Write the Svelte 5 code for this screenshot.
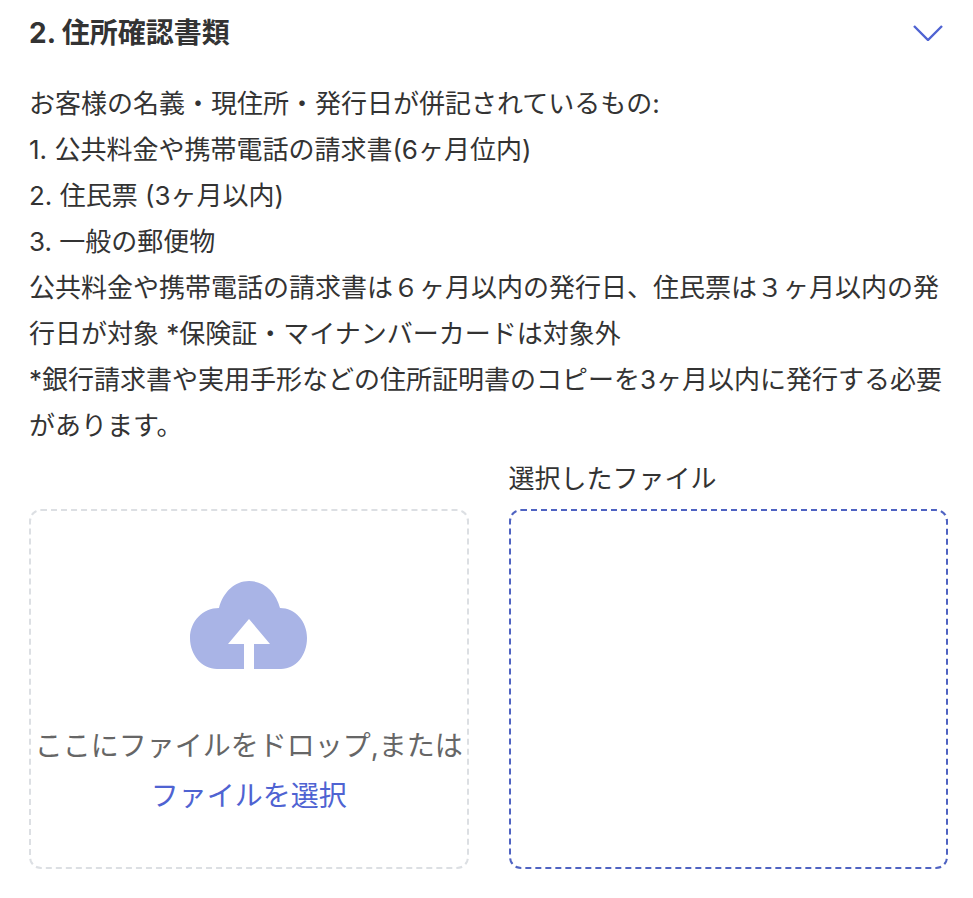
<script>
  const lines = [
    'お客様の名義・現住所・発行日が併記されているもの:',
    '1. 公共料金や携帯電話の請求書(6ヶ月位内)',
    '2. 住民票 (3ヶ月以内)',
    '3. 一般の郵便物',
    '公共料金や携帯電話の請求書は６ヶ月以内の発行日、住民票は３ヶ月以内の発行日が対象 *保険証・マイナンバーカードは対象外',
    '*銀行請求書や実用手形などの住所証明書のコピーを3ヶ月以内に発行する必要があります。'
  ];
</script>

<div class="page">
  <div class="head">
    <h2>2. 住所確認書類</h2>
    <svg class="chev" width="30" height="16" viewBox="0 0 30 16" fill="none"><path d="M1 1 L15 15 L29 1" stroke="#4f63d2" stroke-width="2.4"/></svg>
  </div>
  <div class="desc">
    {#each lines as l}<div>{l}</div>{/each}
  </div>
  <div class="cols">
    <div class="col">
      <div class="label">&nbsp;</div>
      <div class="drop">
        <svg width="118" height="88" viewBox="0 0 118 88"><path fill="#a9b4e6" d="M27 88 C12 88 0 74 0 57 C0 40 13 27 29 27 C33 11 45 0 59 0 C74 0 86 11 90 27 C105 27 117 40 117 57 C117 74 106 88 91 88 L64 88 L64 63 L80 63 L59 38 L38 63 L54 63 L54 88 Z"/></svg>
        <div class="t1">ここにファイルをドロップ,または</div>
        <div class="t2">ファイルを選択</div>
      </div>
    </div>
    <div class="col">
      <div class="label">選択したファイル</div>
      <div class="selected"></div>
    </div>
  </div>
</div>

<style>
  :global(body) { margin: 0; background: #fff; }
  .page { padding: 0 25px 0 29px; font-family: Inter, "Noto Sans CJK JP", sans-serif; color: #333; }
  .head { display: flex; justify-content: space-between; align-items: center; height: 62px; }
  h2 { margin: 0; font-size: 28px; font-weight: 700; color: #333; }
  .chev { margin: 4px 5px 0 0; }
  .desc { font-size: 26px; line-height: 46px; margin-top: 19px; }
  .cols { display: grid; grid-template-columns: 1fr 1fr; gap: 40px; margin-top: 5px; }
  .label { font-size: 26px; line-height: 50px; height: 55px; }
  .drop { height: 360px; box-sizing: border-box; border: 2px dashed #dcdfe3; border-radius: 12px; display: flex; flex-direction: column; align-items: center; padding-top: 70px; }
  .t1 { font-size: 28px; color: #666; margin-top: 55px; white-space: nowrap; }
  .t2 { font-size: 28px; color: #4f63d2; margin-top: 10px; }
  .selected { height: 360px; box-sizing: border-box; border: 2px dashed #4f63c2; border-radius: 12px; }
</style>
